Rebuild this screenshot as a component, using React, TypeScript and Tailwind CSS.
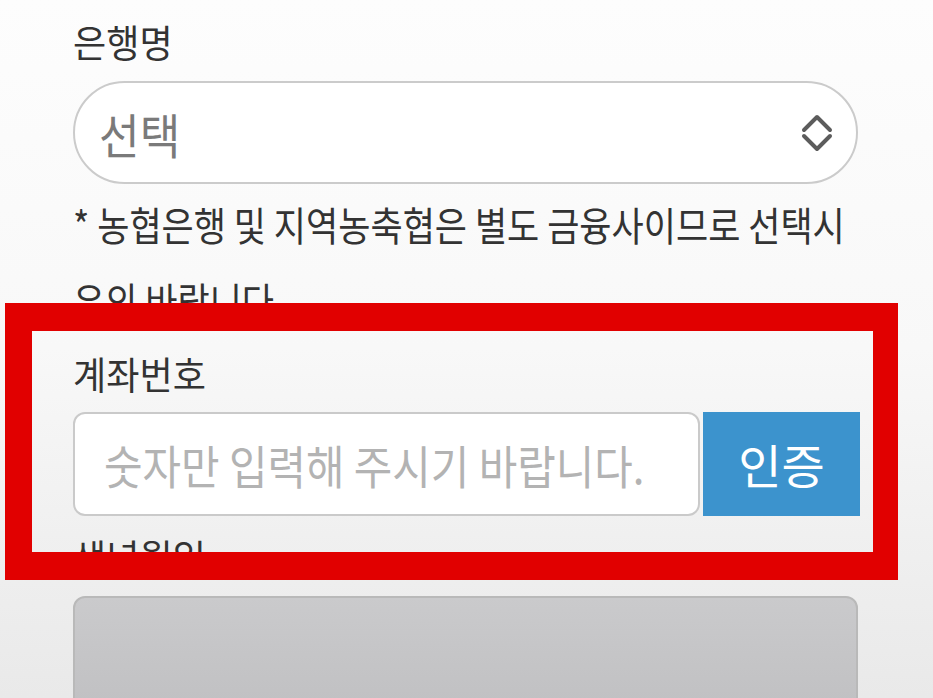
import React from "react";

function Chevrons() {
  return (
    <svg width="32" height="38" viewBox="0 0 32 38" fill="none">
      <path d="M3 16 L16 3 L29 16" stroke="#5c5c5c" strokeWidth="4" strokeLinecap="round" strokeLinejoin="round" />
      <path d="M3 22 L16 35 L29 22" stroke="#5c5c5c" strokeWidth="4" strokeLinecap="round" strokeLinejoin="round" />
    </svg>
  );
}

export default function App() {
  return (
    <div className="relative h-[698px] w-full overflow-hidden bg-gradient-to-b from-[#fdfdfd] via-[#f8f8f8] to-[#e9e9e9] font-['Noto_Sans_CJK_KR','Noto_Sans',sans-serif] text-[#333333]">
      <div className="flex w-[787px] flex-col pl-[73px] box-content">
        <div className="mt-[14px] flex h-[53px] items-center text-[38px]">
          <span className="inline-block origin-left scale-x-[0.95] whitespace-nowrap">은행명</span>
        </div>

        <div className="mt-[14px] flex h-[103px] w-[785px] items-center justify-between rounded-full border-2 border-[#cbcbcb] bg-white pl-[24px] pr-[23px]">
          <span className="inline-block origin-left scale-x-[0.92] whitespace-nowrap text-[48px] text-[#7a7a7a]">선택</span>
          <Chevrons />
        </div>

        <div className="mt-[2px] flex flex-col text-[40px] leading-[76px]">
          <span className="inline-block origin-left scale-x-[0.875] whitespace-nowrap">* 농협은행 및 지역농축협은 별도 금융사이므로 선택시</span>
          <span className="inline-block origin-left scale-x-[0.875] whitespace-nowrap">유의 바랍니다.</span>
        </div>

        <div className="mt-[8px] flex h-[53px] items-center text-[38px]">
          <span className="inline-block origin-left scale-x-[0.95] whitespace-nowrap">계좌번호</span>
        </div>

        <div className="mt-[13px] flex h-[104px] gap-[3px]">
          <div className="flex w-[627px] items-center rounded-[12px] border-2 border-[#cacaca] bg-white pl-[29px]">
            <span className="inline-block origin-left scale-x-[0.91] whitespace-nowrap text-[46px] text-[#b3b3b3]">숫자만 입력해 주시기 바랍니다.</span>
          </div>
          <div className="flex w-[157px] items-center justify-center bg-[#3c93cd] text-white">
            <span className="whitespace-nowrap text-[47px]">인증</span>
          </div>
        </div>

        <div className="mt-[13px] flex h-[53px] items-center text-[38px]">
          <span className="inline-block origin-left scale-x-[0.95] whitespace-nowrap">생년월일</span>
        </div>

        <div className="mt-[14px] h-[130px] w-[785px] rounded-[12px] border-2 border-[#b9b9b9] bg-gradient-to-b from-[#cacacc] to-[#bfbfc1]" />
      </div>

      <div className="pointer-events-none absolute left-[5px] top-[303px] h-[277px] w-[893px] border-b-[28px] border-l-[27px] border-r-[25px] border-t-[28px] border-[#e10000]" />
    </div>
  );
}
